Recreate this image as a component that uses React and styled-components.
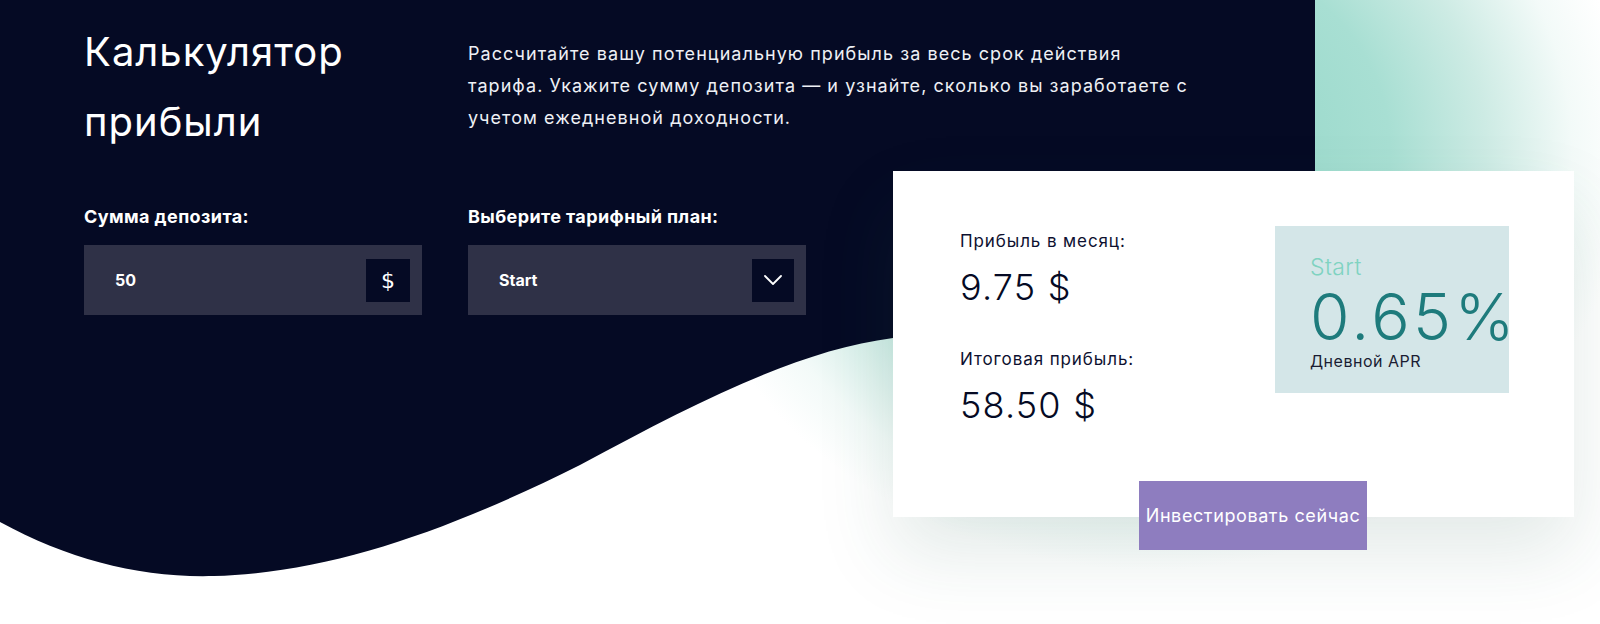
import React from "react";
import styled, { createGlobalStyle } from "styled-components";

const GlobalStyle = createGlobalStyle`
  html, body {
    margin: 0;
    padding: 0;
    background: #ffffff;
  }
  body {
    font-family: "Inter", "Noto Sans", sans-serif;
    -webkit-font-smoothing: antialiased;
  }
  * { box-sizing: border-box; }
`;

const Section = styled.section`
  position: relative;
  width: 1600px;
  height: 624px;
  overflow: hidden;
  background:
    radial-gradient(
      ellipse 480px 420px at 1150px 150px,
      #8dd4c4 0%,
      #a8dfd3 50%,
      #cdebe4 70%,
      rgba(235, 247, 244, 0.6) 88%,
      rgba(255, 255, 255, 0) 100%
    ),
    #ffffff;
`;

/* dark backdrop with the wavy lower edge */
const Backdrop = styled.svg`
  position: absolute;
  inset: 0;
  width: 1600px;
  height: 624px;
  z-index: 0;
`;

const Layout = styled.div`
  position: relative;
  z-index: 1;
  display: grid;
  grid-template-columns: 384px 425px 681px;
  grid-template-rows: 171px auto;
  padding-left: 84px;
`;

const Title = styled.h1`
  grid-column: 1;
  grid-row: 1;
  margin: 17px 0 0;
  font-size: 40px;
  line-height: 70px;
  font-weight: 400;
  color: #ffffff;
  letter-spacing: 1px;
`;

const Description = styled.p`
  grid-column: 2 / 4;
  grid-row: 1;
  margin: 38px 0 0;
  font-size: 18px;
  line-height: 32px;
  font-weight: 400;
  color: #eef0f5;
  white-space: nowrap;
  letter-spacing: 1.05px;
`;

const Field = styled.div`
  grid-column: ${(p) => p.$col};
  grid-row: 2;
  display: flex;
  flex-direction: column;
  gap: 17px;
  padding-top: 35px;
  width: 338px;
`;

const FieldLabel = styled.label`
  font-size: 18px;
  line-height: 22px;
  font-weight: 700;
  color: #ffffff;
  letter-spacing: 0.4px;
  white-space: nowrap;
`;

const InputBox = styled.div`
  display: flex;
  align-items: center;
  justify-content: space-between;
  height: 70px;
  padding: 0 12px 0 31px;
  background: #2f3147;
`;

const InputValue = styled.span`
  font-size: 16px;
  font-weight: 700;
  color: #ffffff;
`;

const AddonBox = styled.span`
  display: flex;
  align-items: center;
  justify-content: center;
  width: ${(p) => p.$w}px;
  height: 43px;
  background: #050a24;
  color: #ffffff;
  font-family: "DejaVu Sans", sans-serif;
  font-size: 22px;
`;

const ResultCard = styled.div`
  grid-column: 3;
  grid-row: 2;
  height: 346px;
  background: #ffffff;
  box-shadow: 0 36px 72px rgba(40, 90, 80, 0.13);
  display: flex;
  flex-direction: column;
  align-items: flex-start;
`;

const CardTop = styled.div`
  flex-shrink: 0;
  display: flex;
  align-items: flex-start;
  padding: 55px 0 0 67px;
`;

const Stats = styled.div`
  width: 315px;
  padding-top: 3px;
  display: flex;
  flex-direction: column;
  gap: 38px;
`;

const Stat = styled.div`
  display: flex;
  flex-direction: column;
  gap: 12px;
`;

const StatLabel = styled.span`
  font-size: 17px;
  line-height: 24px;
  color: #0d1030;
  letter-spacing: 0.9px;
  white-space: nowrap;
`;

const StatValue = styled.span`
  font-size: 36px;
  line-height: 44px;
  font-weight: 300;
  color: #050a24;
  letter-spacing: 1.2px;
  white-space: nowrap;
`;

const AprBox = styled.div`
  width: 234px;
  height: 167px;
  padding: 28px 0 0 35px;
  background: #d4e6e8;
  display: flex;
  flex-direction: column;
  white-space: nowrap;
`;

const PlanName = styled.span`
  font-size: 23px;
  line-height: 26px;
  font-weight: 300;
  color: #7fd3c1;
  letter-spacing: 0.4px;
`;

const Rate = styled.span`
  margin-top: 5px;
  font-size: 64px;
  line-height: 64px;
  font-weight: 300;
  color: #1e7b7c;
  letter-spacing: 3.4px;
`;

const RateCaption = styled.span`
  margin-top: 2px;
  font-size: 16px;
  line-height: 20px;
  color: #1a1d33;
  letter-spacing: 0.5px;
`;

const InvestButton = styled.button`
  flex-shrink: 0;
  margin: 54px 0 0 246px;
  width: 228px;
  height: 69px;
  border: 0;
  background: #8e7dbf;
  color: #ffffff;
  font-family: inherit;
  font-size: 18px;
  font-weight: 400;
  letter-spacing: 0.6px;
  cursor: pointer;
  white-space: nowrap;
  padding: 0;
`;

const Chevron = () => (
  <svg width="18" height="10" viewBox="0 0 18 10" fill="none">
    <polyline
      points="1,1 9,9 17,1"
      stroke="#ffffff"
      strokeWidth="1.8"
      strokeLinecap="round"
      strokeLinejoin="round"
    />
  </svg>
);

export default function App() {
  return (
    <>
      <GlobalStyle />
      <Section>
        <Backdrop viewBox="0 0 1600 624" aria-hidden="true">
          <path
            fill="#050a24"
            d="M0 0 H1315 V290 C1200 300 1000 325 893 338 C800 350 700 400 580 465 C450 530 330 573 214 576 C140 578 70 560 0 522 Z"
          />
        </Backdrop>
        <Layout>
          <Title>
            Калькулятор
            <br />
            прибыли
          </Title>
          <Description>
            Рассчитайте вашу потенциальную прибыль за весь срок действия
            <br />
            тарифа. Укажите сумму депозита — и узнайте, сколько вы заработаете с
            <br />
            учетом ежедневной доходности.
          </Description>

          <Field $col={1}>
            <FieldLabel>Сумма депозита:</FieldLabel>
            <InputBox>
              <InputValue>50</InputValue>
              <AddonBox $w={44}>$</AddonBox>
            </InputBox>
          </Field>

          <Field $col={2}>
            <FieldLabel>Выберите тарифный план:</FieldLabel>
            <InputBox>
              <InputValue>Start</InputValue>
              <AddonBox $w={42}>
                <Chevron />
              </AddonBox>
            </InputBox>
          </Field>

          <ResultCard>
            <CardTop>
              <Stats>
                <Stat>
                  <StatLabel>Прибыль в месяц:</StatLabel>
                  <StatValue>9.75 $</StatValue>
                </Stat>
                <Stat>
                  <StatLabel>Итоговая прибыль:</StatLabel>
                  <StatValue>58.50 $</StatValue>
                </Stat>
              </Stats>
              <AprBox>
                <PlanName>Start</PlanName>
                <Rate>0.65%</Rate>
                <RateCaption>Дневной APR</RateCaption>
              </AprBox>
            </CardTop>
            <InvestButton>Инвестировать сейчас</InvestButton>
          </ResultCard>
        </Layout>
      </Section>
    </>
  );
}
